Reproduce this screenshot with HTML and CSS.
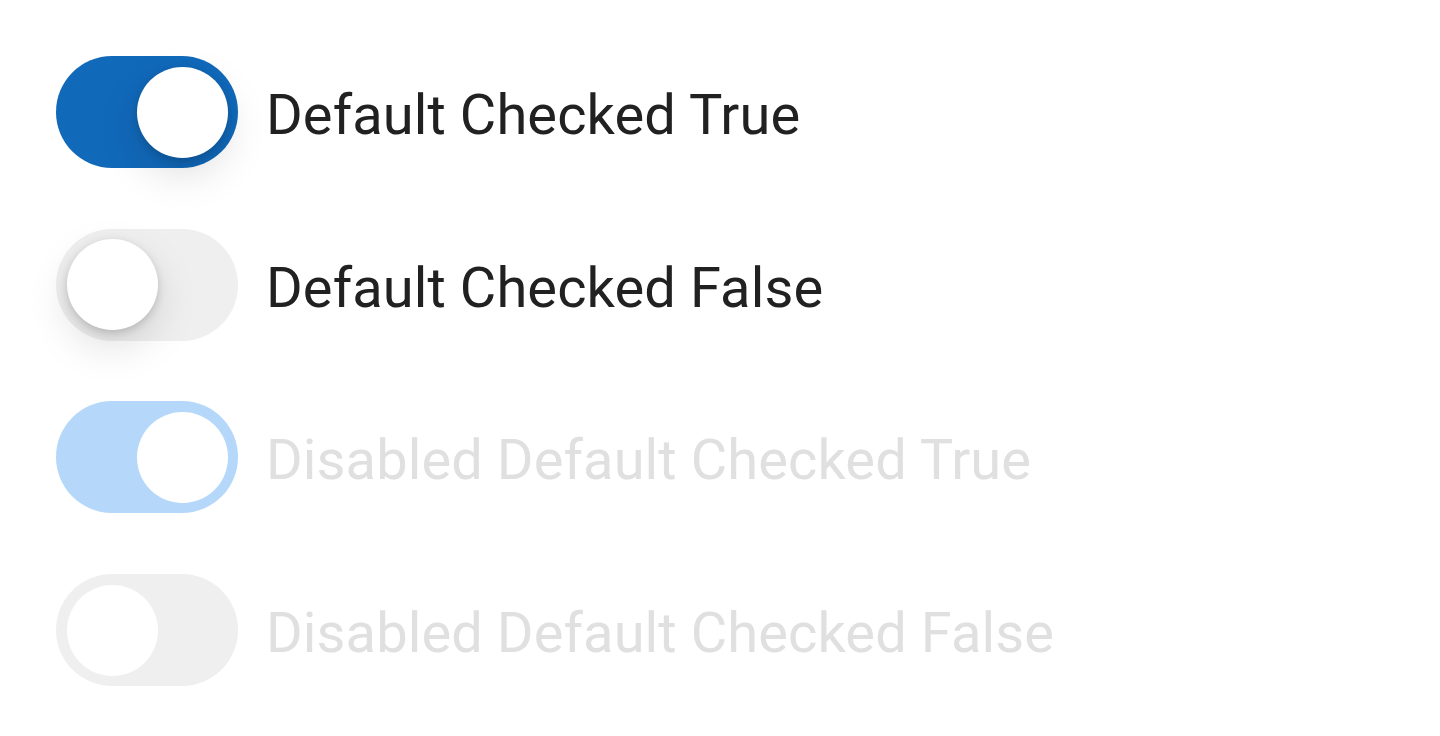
FILE: index.html
```html
<!DOCTYPE html>
<html>
<head>
<meta charset="utf-8">
<link rel="stylesheet" href="styles.css">
</head>
<body>
<div class="list">
  <label class="row">
    <span class="track on"><span class="knob"></span></span>
    <span class="label">Default Checked True</span>
  </label>
  <label class="row">
    <span class="track off"><span class="knob"></span></span>
    <span class="label">Default Checked False</span>
  </label>
  <label class="row disabled">
    <span class="track on"><span class="knob"></span></span>
    <span class="label">Disabled Default Checked True</span>
  </label>
  <label class="row disabled">
    <span class="track off"><span class="knob"></span></span>
    <span class="label">Disabled Default Checked False</span>
  </label>
</div>
</body>
</html>
```
FILE: styles.css
```css
html, body {
  margin: 0;
  padding: 0;
  background: #ffffff;
}
body {
  font-family: Roboto, "Liberation Sans", sans-serif;
}
.list {
  display: flex;
  flex-direction: column;
  gap: 60.7px;
  padding: 56px 0 0 56px;
}
.row {
  display: flex;
  align-items: center;
  gap: 28px;
  height: 112px;
}
.track {
  display: flex;
  align-items: center;
  box-sizing: border-box;
  width: 182px;
  height: 112px;
  padding: 10.5px;
  border-radius: 56px;
  flex: none;
}
.track.on {
  background: #1169ba;
  justify-content: flex-end;
}
.track.off {
  background: #efefef;
  justify-content: flex-start;
}
.knob {
  width: 91px;
  height: 91px;
  border-radius: 50%;
  background: #ffffff;
  box-shadow: 0 3px 8px rgba(0, 0, 0, 0.16), 0 16px 42px rgba(0, 0, 0, 0.13);
}
.label {
  font-size: 56px;
  color: #212121;
  line-height: 1;
  letter-spacing: 0.1px;
  padding-top: 6px;
}
.disabled .track.on {
  background: #b5d7fa;
}
.disabled .track.off {
  background: #efefef;
}
.disabled .knob {
  box-shadow: none;
}
.disabled .label {
  color: #e0e0e0;
}
```
